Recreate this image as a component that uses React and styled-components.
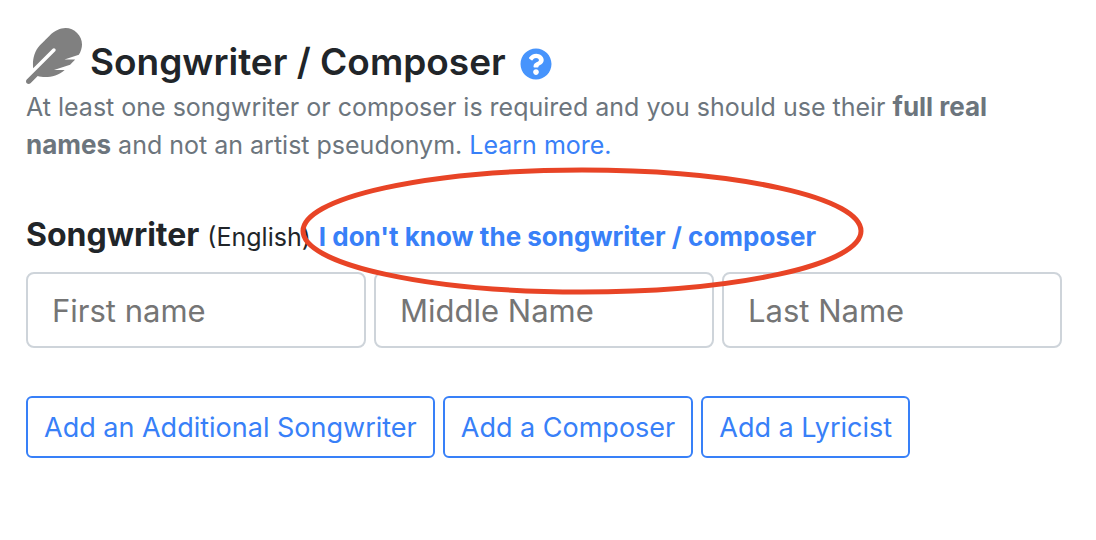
import React from 'react';
import styled, { createGlobalStyle } from 'styled-components';
import { FaFeather, FaQuestionCircle } from 'react-icons/fa';

const GlobalStyle = createGlobalStyle`
  body {
    margin: 0;
    background: #fff;
    color: #212529;
    font-family: Inter, 'Liberation Sans', sans-serif;
  }

  * {
    box-sizing: border-box;
  }
`;

const Page = styled.main`
  padding: 28px 34px 28px 26px;
`;

const Header = styled.header`
  display: flex;
  align-items: flex-start;
`;

const FeatherIcon = styled(FaFeather)`
  width: 56px;
  height: 56px;
  margin-right: 8px;
  color: #808080;
`;

const Title = styled.h1`
  margin: 10px 14px 0 0;
  font-size: 37px;
  font-weight: 600;
  line-height: 48px;
`;

const HelpButton = styled.button`
  display: flex;
  margin-top: 20px;
  padding: 0;
  border: 0;
  background: none;
  color: #4794fc;
  cursor: pointer;
`;

const Description = styled.p`
  margin: 2px 0 0;
  color: #6c757d;
  font-size: 25px;
  line-height: 38px;
`;

const Strong = styled.strong`
  font-size: 26px;
  line-height: 1;
`;

const Link = styled.a`
  color: #3880f8;
  text-decoration: none;
`;

const SectionHeading = styled.div`
  display: flex;
  align-items: baseline;
  margin-top: 49px;
  font-size: 25px;
  line-height: 44px;
`;

const Role = styled.h2`
  margin: 0 8px 0 0;
  font-size: 32px;
  font-weight: 700;
  line-height: 44px;
`;

const Highlighted = styled.span`
  position: relative;
  margin-left: 8px;
  font-size: 26px;
  font-weight: 700;
`;

const Ellipse = styled.svg`
  position: absolute;
  top: -48px;
  left: -18px;
  width: 563px;
  height: 128px;
  overflow: visible;
  pointer-events: none;
`;

const Fields = styled.div`
  display: grid;
  grid-template-columns: repeat(3, 1fr);
  gap: 8px;
  margin-top: 13px;
`;

const Input = styled.input`
  width: 100%;
  height: 76px;
  padding: 0 24px;
  border: 2px solid #ced4da;
  border-radius: 8px;
  background: #fff;
  color: #495057;
  font-family: inherit;
  font-size: 31px;

  &::placeholder {
    color: #757575;
    opacity: 1;
  }
`;

const Actions = styled.div`
  display: flex;
  flex-wrap: wrap;
  gap: 8px;
  margin-top: 48px;
`;

const Button = styled.button`
  height: 62px;
  padding: 0 16px;
  border: 2px solid #3880f8;
  border-radius: 6px;
  background: #fff;
  color: #3880f8;
  font-family: inherit;
  font-size: 27px;
  cursor: pointer;
`;

const fields = ['First name', 'Middle Name', 'Last Name'];
const actions = ['Add an Additional Songwriter', 'Add a Composer', 'Add a Lyricist'];

export default () => (
  <Page>
    <GlobalStyle />
    <Header>
      <FeatherIcon />
      <Title>Songwriter / Composer</Title>
      <HelpButton type="button" aria-label="Help">
        <FaQuestionCircle size={32} />
      </HelpButton>
    </Header>
    <Description>
      At least one songwriter or composer is required and you should use their{' '}
      <Strong>full real names</Strong> and not an artist pseudonym.{' '}
      <Link href="#learn-more">Learn more.</Link>
    </Description>
    <SectionHeading>
      <Role>Songwriter</Role>
      <span>(English)</span>
      <Highlighted>
        <Link href="#unknown">I don't know the songwriter / composer</Link>
        <Ellipse viewBox="0 0 563 128" aria-hidden="true">
          <ellipse cx="281" cy="64" rx="279" ry="61" fill="none" stroke="#e84426" strokeWidth="5" />
        </Ellipse>
      </Highlighted>
    </SectionHeading>
    <Fields>
      {fields.map((name) => (
        <Input key={name} type="text" placeholder={name} aria-label={name} />
      ))}
    </Fields>
    <Actions>
      {actions.map((label) => (
        <Button key={label} type="button">{label}</Button>
      ))}
    </Actions>
  </Page>
);
